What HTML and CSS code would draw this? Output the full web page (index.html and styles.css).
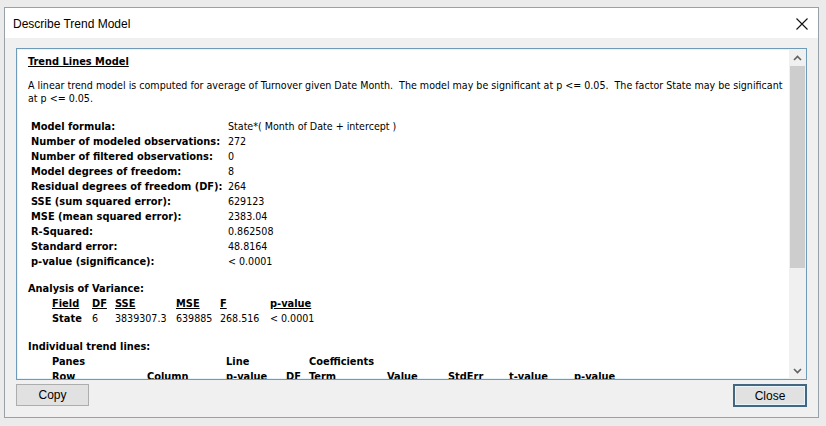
FILE: index.html
```html
<!DOCTYPE html>
<html>
<head>
<meta charset="utf-8">
<link rel="stylesheet" href="styles.css">
</head>
<body>
<div class="window">
  <div class="titlebar">
    <span class="title">Describe Trend Model</span>
    <svg class="close-x" width="12" height="12" viewBox="0 0 12 12"><path d="M0.5 0.5 L11.5 11.5 M11.5 0.5 L0.5 11.5" stroke="#111" stroke-width="1.1" fill="none"/></svg>
  </div>
  <div class="client">
    <div class="panel">
      <div class="content">
        <div class="heading">Trend Lines Model</div>
        <p class="para">A linear trend model is computed for average of Turnover given Date Month.&nbsp; The model may be significant at p &lt;= 0.05.&nbsp; The factor State may be significant<br>at p &lt;= 0.05.</p>
        <div class="stats">
          <b>Model formula:</b><span>State*( Month of Date + intercept )</span>
          <b>Number of modeled observations:</b><span>272</span>
          <b>Number of filtered observations:</b><span>0</span>
          <b>Model degrees of freedom:</b><span>8</span>
          <b>Residual degrees of freedom (DF):</b><span>264</span>
          <b>SSE (sum squared error):</b><span>629123</span>
          <b>MSE (mean squared error):</b><span>2383.04</span>
          <b>R-Squared:</b><span>0.862508</span>
          <b>Standard error:</b><span>48.8164</span>
          <b>p-value (significance):</b><span>&lt; 0.0001</span>
        </div>
        <div class="section-title anova-title">Analysis of Variance:</div>
        <div class="anova">
          <u>Field</u><u>DF</u><u>SSE</u><u>MSE</u><u>F</u><u>p-value</u>
          <b>State</b><span>6</span><span>3839307.3</span><span>639885</span><span>268.516</span><span>&lt; 0.0001</span>
        </div>
        <div class="section-title trend-title">Individual trend lines:</div>
        <div class="trend">
          <b class="span2">Panes</b><b class="span2">Line</b><b class="span5">Coefficients</b>
          <u>Row</u><u>Column</u><u>p-value</u><u>DF</u><u>Term</u><u>Value</u><u>StdErr</u><u>t-value</u><u>p-value</u>
        </div>
      </div>
      <div class="scrollbar">
        <div class="arrow">
          <svg width="9" height="6" viewBox="0 0 9 6"><path d="M1 5 L4.5 1.5 L8 5" stroke="#606060" stroke-width="1.6" fill="none"/></svg>
        </div>
        <div class="track"><div class="thumb"></div></div>
        <div class="arrow">
          <svg width="9" height="6" viewBox="0 0 9 6"><path d="M1 1 L4.5 4.5 L8 1" stroke="#606060" stroke-width="1.6" fill="none"/></svg>
        </div>
      </div>
    </div>
    <div class="buttons">
      <button class="btn">Copy</button>
      <button class="btn btn-default">Close</button>
    </div>
  </div>
</div>
</body>
</html>
```

FILE: styles.css
```css
html, body {
  margin: 0;
  padding: 0;
}
body {
  background: #ebebeb;
  width: 826px;
  height: 426px;
  overflow: hidden;
  font-family: "Liberation Sans", Arial, sans-serif;
}
.window {
  margin: 7px 0 0 4px;
  width: 813px;
  height: 409px;
  border: 1px solid #98a0a8;
  background: #f0f0f0;
  display: flex;
  flex-direction: column;
}
.titlebar {
  height: 30px;
  background: #fff;
  display: flex;
  align-items: center;
  justify-content: space-between;
  padding: 0 10px 0 8px;
  flex: none;
}
.title {
  font-size: 12px;
  color: #000;
  margin-top: 1px;
}
.close-x {
  margin-top: 1px;
}
.client {
  flex: 1;
  display: flex;
  flex-direction: column;
  padding: 10px 11px 0 11px;
}
.panel {
  height: 330px;
  border: 1px solid #6f9ab8;
  background: #fff;
  display: flex;
  overflow: hidden;
  box-shadow: inset 0 0 0 1px #e6f3fa;
}
.content {
  flex: 1;
  padding: 5px 0 0 11px;
  font-family: "DejaVu Sans Condensed", "DejaVu Sans", sans-serif;
  font-size: 10.6px;
  color: #000;
  line-height: 15px;
  overflow: hidden;
}
.content b, .content u, .heading, .section-title {
  font-size: 10.95px;
}
.heading {
  font-weight: bold;
  text-decoration: underline;
}
.para {
  margin: 10px 0 0 0;
  line-height: 13px;
  white-space: nowrap;
}
.stats {
  display: grid;
  grid-template-columns: 197px auto;
  margin: 14px 0 0 3px;
}
.section-title {
  font-weight: bold;
}
.anova-title {
  margin-top: 12px;
}
.trend-title {
  margin-top: 13px;
}
.anova {
  display: grid;
  grid-template-columns: 40px 23px 61px 44px 50px auto;
  margin-left: 24px;
}
.anova u, .trend u {
  font-weight: bold;
}
.trend {
  display: grid;
  grid-template-columns: 95px 79px 60px 23px 78px 61px 61px 65px auto;
  margin-left: 24px;
}
.span2 { grid-column: span 2; }
.span5 { grid-column: span 5; }
.scrollbar {
  width: 17px;
  flex: none;
  background: #f0f0f0;
  display: flex;
  flex-direction: column;
}
.arrow {
  height: 17px;
  display: flex;
  align-items: center;
  justify-content: center;
  flex: none;
}
.track {
  flex: 1;
}
.thumb {
  margin: 0 1px;
  height: 202px;
  background: #cdcdcd;
}
.buttons {
  display: flex;
  justify-content: space-between;
  margin-top: 4px;
}
.btn {
  width: 73px;
  height: 22px;
  border: 1px solid #adadad;
  background: #e1e1e1;
  font-family: "Liberation Sans", Arial, sans-serif;
  font-size: 12px;
  color: #000;
  padding: 0;
  margin: 0;
}
.btn-default {
  border: 2px solid #44677f;
  box-shadow: inset 0 0 0 1px #e8f4fb;
  height: 23px;
  width: 74px;
}
```
